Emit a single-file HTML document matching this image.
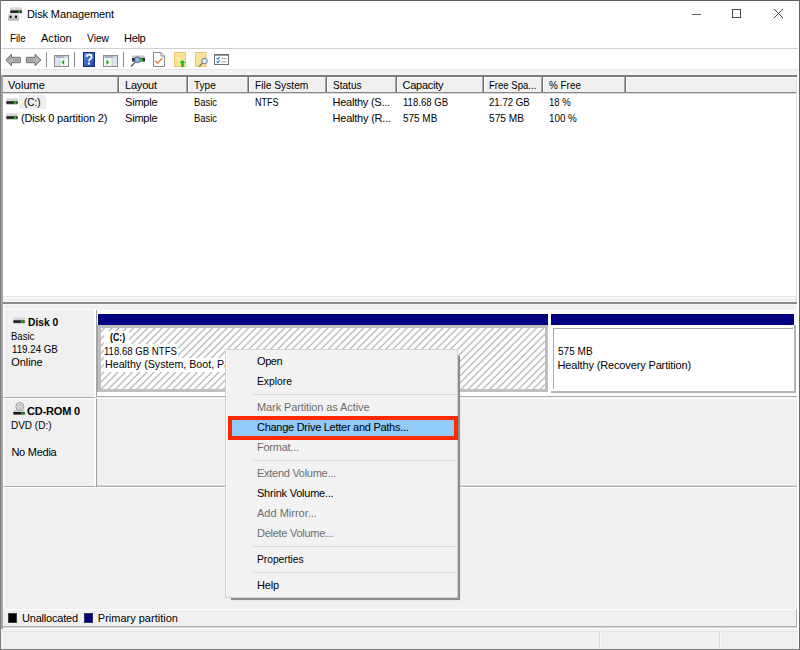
<!DOCTYPE html>
<html><head><meta charset="utf-8"><style>
html,body{margin:0;padding:0;width:800px;height:650px;overflow:hidden;background:#fff;}
body{position:relative;font-family:"Liberation Sans",sans-serif;}
.r{position:absolute;}
.t{position:absolute;white-space:nowrap;line-height:13px;font-family:"Liberation Sans",sans-serif;}
</style></head><body>
<div class="r" style="left:0px;top:0px;width:800px;height:650px;background:#ffffff;"></div>
<svg class="r" style="left:8px;top:7px" width="15" height="14" viewBox="0 0 15 14"><defs><linearGradient id="tg" x1="0" y1="0" x2="0" y2="1"><stop offset="0" stop-color="#e4e4e4"/><stop offset="1" stop-color="#b4b4b4"/></linearGradient></defs><rect x="2" y="0" width="12" height="6.5" rx="1.5" fill="url(#tg)"/><rect x="2.3" y="3.4" width="11.5" height="2.6" fill="#252525"/><rect x="10.3" y="3.7" width="1.7" height="2" fill="#1fd61f"/><rect x="0" y="6.5" width="11" height="7.3" rx="0.8" fill="url(#tg)"/><ellipse cx="2.6" cy="9.9" rx="1.1" ry="1.4" fill="#161616"/><ellipse cx="8" cy="9.9" rx="1.1" ry="1.4" fill="#161616"/></svg>
<div class="t" style="left:27.00px;top:8px;font-size:11px;color:#000;font-weight:normal;letter-spacing:-0.114px;">Disk Management</div>
<div class="r" style="left:692px;top:14px;width:9px;height:1px;background:#606060;"></div>
<div class="r" style="left:732px;top:9px;width:9px;height:9px;background:transparent;border:1px solid #4a4a4a;box-sizing:border-box;"></div>
<svg class="r" style="left:773px;top:8px" width="11" height="11" viewBox="0 0 11 11"><path d="M1 1L10 10M10 1L1 10" stroke="#2a2a2a" stroke-width="0.9"/></svg>
<div class="t" style="left:10.40px;top:32px;font-size:11px;color:#000;font-weight:normal;transform:scaleX(0.8860);transform-origin:0 0;">File</div>
<div class="t" style="left:41.00px;top:32px;font-size:11px;color:#000;font-weight:normal;letter-spacing:0.029px;">Action</div>
<div class="t" style="left:87.00px;top:32px;font-size:11px;color:#000;font-weight:normal;transform:scaleX(0.9283);transform-origin:0 0;">View</div>
<div class="t" style="left:124.00px;top:32px;font-size:11px;color:#000;font-weight:normal;letter-spacing:-0.302px;">Help</div>
<div class="r" style="left:1px;top:48px;width:797px;height:1px;background:#d0d0d0;"></div>
<svg class="r" style="left:5px;top:53px" width="40" height="15" viewBox="0 0 40 15"><path d="M0.8 7 L6.5 1.2 L6.5 4.3 L14.8 4.3 Q15.3 4.3 15.3 5 L15.3 9 Q15.3 9.7 14.8 9.7 L6.5 9.7 L6.5 12.8 Z" fill="#b4b4b4" stroke="#6a6a6a" stroke-width="1" stroke-linejoin="round"/><path d="M3 7 L6 4.5 M8 7 H14" stroke="#888" stroke-width="1"/><path d="M35.8 7 L30.1 1.2 L30.1 4.3 L21.8 4.3 Q21.3 4.3 21.3 5 L21.3 9 Q21.3 9.7 21.8 9.7 L30.1 9.7 L30.1 12.8 Z" fill="#b4b4b4" stroke="#6a6a6a" stroke-width="1" stroke-linejoin="round"/><path d="M22.5 7 H28.5" stroke="#888" stroke-width="1"/></svg>
<div class="r" style="left:46px;top:52px;width:1px;height:15px;background:#8a8a8a;"></div>
<div class="r" style="left:74px;top:52px;width:1px;height:15px;background:#8a8a8a;"></div>
<div class="r" style="left:123px;top:52px;width:1px;height:15px;background:#8a8a8a;"></div>
<svg class="r" style="left:54px;top:55px" width="15" height="12" viewBox="0 0 15 12"><rect x="0.5" y="0.5" width="14" height="11" fill="#fafafa" stroke="#8c8c8c"/><rect x="1" y="1" width="13" height="2.2" fill="#c9d3e0"/><rect x="2" y="1.6" width="8" height="0.8" fill="#7088a8"/><rect x="1" y="3.5" width="4.5" height="7.5" fill="#dce6f2"/><rect x="5.5" y="3.5" width="0.8" height="7.5" fill="#a8b8cc"/><path d="M7.3 7.3 L10.2 4.6 L10.2 10 Z" fill="#1fae1f"/></svg>
<svg class="r" style="left:83px;top:52px" width="12" height="15" viewBox="0 0 12 15"><defs><linearGradient id="hg" x1="0" y1="0" x2="1" y2="1"><stop offset="0" stop-color="#5a8ee6"/><stop offset="1" stop-color="#1f45b0"/></linearGradient></defs><rect x="0.5" y="0.5" width="11" height="14" fill="url(#hg)" stroke="#142a78"/><path d="M3.6 5 Q3.6 2.6 6 2.6 Q8.6 2.6 8.6 5 Q8.6 6.4 7 7.3 Q6 7.9 6 9.5" stroke="#fff" stroke-width="1.7" fill="none"/><rect x="5" y="10.6" width="2" height="2" fill="#fff"/></svg>
<svg class="r" style="left:103px;top:55px" width="15" height="12" viewBox="0 0 15 12"><rect x="0.5" y="0.5" width="14" height="11" fill="#fafafa" stroke="#8c8c8c"/><rect x="1" y="1" width="13" height="2.2" fill="#c9d3e0"/><rect x="2" y="1.6" width="8" height="0.8" fill="#7088a8"/><rect x="9.5" y="3.5" width="4.5" height="7.5" fill="#dce6f2"/><rect x="8.7" y="3.5" width="0.8" height="7.5" fill="#a8b8cc"/><path d="M6.3 7.3 L3.4 4.6 L3.4 10 Z" fill="#1fae1f"/></svg>
<svg class="r" style="left:130px;top:54px" width="16" height="14" viewBox="0 0 16 14"><rect x="2" y="1.5" width="13" height="3.5" rx="1" fill="#c4c4c4"/><rect x="2" y="4" width="13" height="3.5" fill="#2a2a2a"/><rect x="10" y="4.6" width="3" height="2.3" fill="#22cc22"/><circle cx="7.5" cy="5.8" r="2.9" fill="#8fb8e0" stroke="#4a6a92" stroke-width="1"/><path d="M5.4 8 L1 12.5" stroke="#506070" stroke-width="1.3"/></svg>
<svg class="r" style="left:153px;top:52px" width="12" height="15" viewBox="0 0 12 15"><path d="M0.5 0.5 H8 L11.5 4 V14.5 H0.5 Z" fill="#fff" stroke="#8a8a8a"/><path d="M8 0.5 V4 H11.5" fill="#eee" stroke="#8a8a8a"/><path d="M2.3 8.8 L4.5 11.2 L9.5 6" stroke="#e08040" stroke-width="1.3" fill="none"/></svg>
<svg class="r" style="left:174px;top:52px" width="12" height="15" viewBox="0 0 12 15"><rect x="0.5" y="0.5" width="11" height="14" fill="#fae39a" stroke="#ecc868"/><path d="M8.5 8 L11.5 11 H9.7 V15 H7.3 V11 H5.5 Z" fill="#12b812"/></svg>
<svg class="r" style="left:195px;top:52px" width="14" height="15" viewBox="0 0 14 15"><rect x="0.5" y="0.5" width="10.5" height="14" fill="#fae39a" stroke="#ecc868"/><circle cx="9.5" cy="9" r="2.8" fill="#dbe8f6" stroke="#6f7f90" stroke-width="1"/><path d="M7.4 11.1 L4 14.6" stroke="#606878" stroke-width="1.3"/></svg>
<svg class="r" style="left:214px;top:54px" width="15" height="11" viewBox="0 0 15 11"><rect x="0.5" y="0.5" width="14" height="10" fill="#fff" stroke="#6e6e6e"/><rect x="1" y="1" width="13" height="1" fill="#9a9a9a"/><path d="M2.5 4 L3.8 5.3 L5.8 2.8" stroke="#2f7fe0" stroke-width="1.1" fill="none"/><path d="M2.5 7.5 L3.8 8.8 L5.8 6.3" stroke="#2f7fe0" stroke-width="1.1" fill="none"/><rect x="7.5" y="4" width="5" height="1" fill="#a8a8a8"/><rect x="7.5" y="7.5" width="5" height="1" fill="#a8a8a8"/></svg>
<div class="r" style="left:1px;top:69px;width:797px;height:6px;background:#f3f3f3;"></div>
<div class="r" style="left:1px;top:69px;width:797px;height:1px;background:#e6e6e6;"></div>
<div class="r" style="left:1px;top:75px;width:797px;height:2px;background:#7c7c7c;"></div>
<div class="r" style="left:1px;top:75px;width:2px;height:228px;background:#a0a0a0;"></div>
<div class="r" style="left:3px;top:77px;width:794px;height:16px;background:#f0f0f0;"></div>
<div class="r" style="left:3px;top:77px;width:794px;height:1px;background:#ffffff;"></div>
<div class="r" style="left:3px;top:92px;width:794px;height:1px;background:#888888;"></div>
<div class="r" style="left:3px;top:93px;width:794px;height:1px;background:#d8d8d8;"></div>
<div class="r" style="left:117px;top:77px;width:1px;height:15px;background:#a8a8a8;"></div>
<div class="r" style="left:118px;top:77px;width:1px;height:15px;background:#6e6e6e;"></div>
<div class="r" style="left:119px;top:78px;width:1px;height:14px;background:#ffffff;"></div>
<div class="r" style="left:186px;top:77px;width:1px;height:15px;background:#a8a8a8;"></div>
<div class="r" style="left:187px;top:77px;width:1px;height:15px;background:#6e6e6e;"></div>
<div class="r" style="left:188px;top:78px;width:1px;height:14px;background:#ffffff;"></div>
<div class="r" style="left:247px;top:77px;width:1px;height:15px;background:#a8a8a8;"></div>
<div class="r" style="left:248px;top:77px;width:1px;height:15px;background:#6e6e6e;"></div>
<div class="r" style="left:249px;top:78px;width:1px;height:14px;background:#ffffff;"></div>
<div class="r" style="left:325px;top:77px;width:1px;height:15px;background:#a8a8a8;"></div>
<div class="r" style="left:326px;top:77px;width:1px;height:15px;background:#6e6e6e;"></div>
<div class="r" style="left:327px;top:78px;width:1px;height:14px;background:#ffffff;"></div>
<div class="r" style="left:395px;top:77px;width:1px;height:15px;background:#a8a8a8;"></div>
<div class="r" style="left:396px;top:77px;width:1px;height:15px;background:#6e6e6e;"></div>
<div class="r" style="left:397px;top:78px;width:1px;height:14px;background:#ffffff;"></div>
<div class="r" style="left:482px;top:77px;width:1px;height:15px;background:#a8a8a8;"></div>
<div class="r" style="left:483px;top:77px;width:1px;height:15px;background:#6e6e6e;"></div>
<div class="r" style="left:484px;top:78px;width:1px;height:14px;background:#ffffff;"></div>
<div class="r" style="left:541px;top:77px;width:1px;height:15px;background:#a8a8a8;"></div>
<div class="r" style="left:542px;top:77px;width:1px;height:15px;background:#6e6e6e;"></div>
<div class="r" style="left:543px;top:78px;width:1px;height:14px;background:#ffffff;"></div>
<div class="r" style="left:624px;top:77px;width:1px;height:15px;background:#a8a8a8;"></div>
<div class="r" style="left:625px;top:77px;width:1px;height:15px;background:#6e6e6e;"></div>
<div class="r" style="left:626px;top:78px;width:1px;height:14px;background:#ffffff;"></div>
<div class="t" style="left:8.00px;top:79px;font-size:11px;color:#000;font-weight:normal;letter-spacing:0.046px;">Volume</div>
<div class="t" style="left:125.00px;top:79px;font-size:11px;color:#000;font-weight:normal;letter-spacing:-0.194px;">Layout</div>
<div class="t" style="left:194.30px;top:79px;font-size:11px;color:#000;font-weight:normal;transform:scaleX(0.9145);transform-origin:0 0;">Type</div>
<div class="t" style="left:255.30px;top:79px;font-size:11px;color:#000;font-weight:normal;transform:scaleX(0.9286);transform-origin:0 0;">File System</div>
<div class="t" style="left:332.50px;top:79px;font-size:11px;color:#000;font-weight:normal;transform:scaleX(0.9153);transform-origin:0 0;">Status</div>
<div class="t" style="left:402.50px;top:79px;font-size:11px;color:#000;font-weight:normal;letter-spacing:-0.257px;">Capacity</div>
<div class="t" style="left:488.70px;top:79px;font-size:11px;color:#000;font-weight:normal;transform:scaleX(0.8702);transform-origin:0 0;">Free Spa...</div>
<div class="t" style="left:548.70px;top:79px;font-size:11px;color:#000;font-weight:normal;transform:scaleX(0.8999);transform-origin:0 0;">% Free</div>
<div class="r" style="left:19px;top:95px;width:27px;height:14px;background:#eeeeee;"></div>
<svg class="r" style="left:6px;top:98px" width="12" height="7" viewBox="0 0 12 7"><rect x="0.3" y="0" width="11.4" height="4" rx="1.2" fill="#d0d0d0"/><rect x="0.3" y="0" width="11.4" height="1.5" rx="0.8" fill="#e2e2e2"/><rect x="0.3" y="3.3" width="11.4" height="2.6" fill="#181818"/><rect x="8" y="3.6" width="2.4" height="2" fill="#22d022"/><rect x="0.5" y="5.9" width="11" height="1" fill="#c8c8c8"/></svg>
<svg class="r" style="left:6px;top:113px" width="12" height="7" viewBox="0 0 12 7"><rect x="0.3" y="0" width="11.4" height="4" rx="1.2" fill="#d0d0d0"/><rect x="0.3" y="0" width="11.4" height="1.5" rx="0.8" fill="#e2e2e2"/><rect x="0.3" y="3.3" width="11.4" height="2.6" fill="#181818"/><rect x="8" y="3.6" width="2.4" height="2" fill="#22d022"/><rect x="0.5" y="5.9" width="11" height="1" fill="#c8c8c8"/></svg>
<div class="t" style="left:23.50px;top:96px;font-size:11px;color:#000;font-weight:normal;transform:scaleX(0.9058);transform-origin:0 0;">(C:)</div>
<div class="t" style="left:125.00px;top:96px;font-size:11px;color:#000;font-weight:normal;letter-spacing:-0.201px;">Simple</div>
<div class="t" style="left:193.60px;top:96px;font-size:11px;color:#000;font-weight:normal;transform:scaleX(0.8541);transform-origin:0 0;">Basic</div>
<div class="t" style="left:254.80px;top:96px;font-size:11px;color:#000;font-weight:normal;transform:scaleX(0.8174);transform-origin:0 0;">NTFS</div>
<div class="t" style="left:332.50px;top:96px;font-size:11px;color:#000;font-weight:normal;letter-spacing:-0.247px;">Healthy (S...</div>
<div class="t" style="left:403.00px;top:96px;font-size:11px;color:#000;font-weight:normal;transform:scaleX(0.8709);transform-origin:0 0;">118.68 GB</div>
<div class="t" style="left:489.00px;top:96px;font-size:11px;color:#000;font-weight:normal;transform:scaleX(0.8778);transform-origin:0 0;">21.72 GB</div>
<div class="t" style="left:549.00px;top:96px;font-size:11px;color:#000;font-weight:normal;transform:scaleX(0.8699);transform-origin:0 0;">18 %</div>
<div class="t" style="left:21.00px;top:112px;font-size:11px;color:#000;font-weight:normal;letter-spacing:-0.147px;">(Disk 0 partition 2)</div>
<div class="t" style="left:125.00px;top:112px;font-size:11px;color:#000;font-weight:normal;letter-spacing:-0.201px;">Simple</div>
<div class="t" style="left:193.60px;top:112px;font-size:11px;color:#000;font-weight:normal;transform:scaleX(0.8541);transform-origin:0 0;">Basic</div>
<div class="t" style="left:332.50px;top:112px;font-size:11px;color:#000;font-weight:normal;letter-spacing:-0.214px;">Healthy (R...</div>
<div class="t" style="left:403.00px;top:112px;font-size:11px;color:#000;font-weight:normal;transform:scaleX(0.9049);transform-origin:0 0;">575 MB</div>
<div class="t" style="left:489.00px;top:112px;font-size:11px;color:#000;font-weight:normal;transform:scaleX(0.9236);transform-origin:0 0;">575 MB</div>
<div class="t" style="left:549.00px;top:112px;font-size:11px;color:#000;font-weight:normal;transform:scaleX(0.8915);transform-origin:0 0;">100 %</div>
<div class="r" style="left:3px;top:296px;width:794px;height:1px;background:#e6e6e6;"></div>
<div class="r" style="left:3px;top:297px;width:794px;height:5px;background:#f6f6f6;"></div>
<div class="r" style="left:3px;top:299px;width:794px;height:2px;background:#ededed;"></div>
<div class="r" style="left:1px;top:302px;width:797px;height:2px;background:#8c8c8c;"></div>
<div class="r" style="left:796px;top:77px;width:1px;height:225px;background:#e3e3e3;"></div>
<div class="r" style="left:1px;top:304px;width:797px;height:325px;background:#f0f0f0;"></div>
<div class="r" style="left:3px;top:304px;width:794px;height:1px;background:#f8f8f8;"></div>
<div class="r" style="left:3px;top:304px;width:1px;height:305px;background:#ffffff;"></div>
<div class="r" style="left:3px;top:309px;width:93px;height:89px;background:#f0f0f0;border-top:1px solid #fff;border-left:1px solid #fff;border-right:2px solid #fff;border-bottom:1px solid #a8a8a8;box-sizing:border-box"></div>
<svg class="r" style="left:13px;top:317px" width="12" height="7" viewBox="0 0 12 7"><rect x="0.3" y="0" width="11.4" height="4" rx="1.2" fill="#d0d0d0"/><rect x="0.3" y="0" width="11.4" height="1.5" rx="0.8" fill="#e2e2e2"/><rect x="0.3" y="3.3" width="11.4" height="2.6" fill="#181818"/><rect x="8" y="3.6" width="2.4" height="2" fill="#22d022"/><rect x="0.5" y="5.9" width="11" height="1" fill="#c8c8c8"/></svg>
<div class="t" style="left:27.50px;top:316px;font-size:11px;color:#000;font-weight:bold;transform:scaleX(0.9290);transform-origin:0 0;">Disk 0</div>
<div class="t" style="left:11.30px;top:330px;font-size:11px;color:#000;font-weight:normal;transform:scaleX(0.8650);transform-origin:0 0;">Basic</div>
<div class="t" style="left:11.50px;top:343px;font-size:11px;color:#000;font-weight:normal;transform:scaleX(0.8845);transform-origin:0 0;">119.24 GB</div>
<div class="t" style="left:11.30px;top:356px;font-size:11px;color:#000;font-weight:normal;letter-spacing:-0.096px;">Online</div>
<div class="r" style="left:96px;top:310px;width:701px;height:87px;background:#ffffff;border-left:1px solid #a0a0a0;border-bottom:1px solid #a8a8a8;box-sizing:border-box"></div>
<div class="r" style="left:98px;top:314px;width:450px;height:11px;background:#000080;"></div>
<div class="r" style="left:97px;top:325px;width:451px;height:67px;background:#bfbfbf;border-left:1px solid #a8a8a8;box-sizing:border-box"></div>
<svg class="r" style="left:101px;top:328px" width="444" height="61"><defs><pattern id="h" patternUnits="userSpaceOnUse" width="7.2" height="7.2" patternTransform="translate(3.6 0)"><path d="M-1.8 1.8 L1.8 -1.8 M0 7.2 L7.2 0 M5.4 9 L9 5.4" stroke="#9e9e9e" stroke-width="1"/></pattern></defs><rect width="444" height="61" fill="#fff"/><rect width="444" height="61" fill="url(#h)"/></svg>
<div class="r" style="left:104px;top:331px;width:25px;height:13px;background:#ffffff;"></div>
<div class="r" style="left:104px;top:344px;width:74px;height:14px;background:#ffffff;"></div>
<div class="r" style="left:104px;top:358px;width:122px;height:14px;background:#ffffff;"></div>
<div class="t" style="left:110.00px;top:331px;font-size:11px;color:#000;font-weight:bold;transform:scaleX(0.7992);transform-origin:0 0;">(C:)</div>
<div class="t" style="left:104.40px;top:345px;font-size:11px;color:#000;font-weight:normal;transform:scaleX(0.8724);transform-origin:0 0;">118.68 GB NTFS</div>
<div class="r" style="left:100px;top:357px;width:126px;height:14px;overflow:hidden"><div class="t" style="left:4.50px;top:1px;font-size:11px;color:#000;font-weight:normal;transform:scaleX(0.97);transform-origin:0 0;">Healthy (System, Boot, Page File, Active, Crash Dump, Primary Partition)</div>
</div>
<div class="r" style="left:551px;top:314px;width:243px;height:11px;background:#000080;"></div>
<div class="r" style="left:551px;top:325px;width:245px;height:68px;background:#ffffff;border-right:2px solid #b4b4b4;border-bottom:2px solid #b4b4b4;box-sizing:border-box"></div>
<div class="r" style="left:553px;top:328px;width:240px;height:61px;background:#ffffff;border-left:1px solid #a8a8a8;border-top:1px solid #a8a8a8;box-sizing:border-box"></div>
<div class="t" style="left:557.50px;top:345px;font-size:11px;color:#000;font-weight:normal;transform:scaleX(0.9129);transform-origin:0 0;">575 MB</div>
<div class="t" style="left:557.50px;top:359px;font-size:11px;color:#000;font-weight:normal;letter-spacing:-0.144px;">Healthy (Recovery Partition)</div>
<div class="r" style="left:3px;top:398px;width:93px;height:89px;background:#f0f0f0;border-top:1px solid #fff;border-left:1px solid #fff;border-right:2px solid #fff;border-bottom:1px solid #a8a8a8;box-sizing:border-box"></div>
<div class="r" style="left:96px;top:398px;width:701px;height:89px;background:#f0f0f0;border-top:1px solid #fff;border-left:1px solid #a0a0a0;border-bottom:1px solid #b4b4b4;box-sizing:border-box"></div>
<div class="r" style="left:97px;top:484px;width:700px;height:1px;background:#f8f8f8;"></div>
<div class="r" style="left:97px;top:485px;width:700px;height:1px;background:#d4d4d4;"></div>
<svg class="r" style="left:13px;top:402px" width="12" height="13" viewBox="0 0 12 13"><rect x="0.5" y="7.5" width="11" height="3" rx="1" fill="#d2d2d2"/><circle cx="6.8" cy="4.6" r="4" fill="#d6d6d6" stroke="#9c9c9c" stroke-width="0.9"/><circle cx="6.8" cy="4.6" r="1.4" fill="#f4f4f4" stroke="#9c9c9c" stroke-width="0.7"/><rect x="0.3" y="10" width="11.4" height="2.6" fill="#1a1a1a"/><rect x="8.3" y="10.4" width="2.4" height="1.8" fill="#22cc22"/></svg>
<div class="t" style="left:27.00px;top:405px;font-size:11px;color:#000;font-weight:bold;letter-spacing:-0.181px;">CD-ROM 0</div>
<div class="t" style="left:11.40px;top:419px;font-size:11px;color:#000;font-weight:normal;transform:scaleX(0.9080);transform-origin:0 0;">DVD (D:)</div>
<div class="t" style="left:11.40px;top:446px;font-size:11px;color:#000;font-weight:normal;letter-spacing:-0.251px;">No Media</div>
<div class="r" style="left:3px;top:487px;width:794px;height:1px;background:#ffffff;"></div>
<div class="r" style="left:1px;top:609px;width:797px;height:1px;background:#ffffff;"></div>
<div class="r" style="left:1px;top:626px;width:797px;height:1px;background:#b0b0b0;"></div>
<div class="r" style="left:1px;top:627px;width:797px;height:1px;background:#d4d4d4;"></div>
<div class="r" style="left:1px;top:628px;width:797px;height:1px;background:#ffffff;"></div>
<div class="r" style="left:796px;top:609px;width:1px;height:18px;background:#b0b0b0;"></div>
<div class="r" style="left:8px;top:613px;width:9px;height:10px;background:#000000;border:1px solid #404040;box-sizing:border-box"></div>
<div class="t" style="left:22.00px;top:612px;font-size:11px;color:#000;font-weight:normal;letter-spacing:-0.198px;">Unallocated</div>
<div class="r" style="left:84px;top:613px;width:9px;height:10px;background:#000080;border:1px solid #303060;box-sizing:border-box"></div>
<div class="t" style="left:97.80px;top:612px;font-size:11px;color:#000;font-weight:normal;">Primary partition</div>
<div class="r" style="left:1px;top:629px;width:797px;height:21px;background:#f0f0f0;"></div>
<div class="r" style="left:1px;top:628px;width:797px;height:1px;background:#ffffff;"></div>
<div class="r" style="left:3px;top:631px;width:795px;height:1px;background:#e6e6e6;"></div>
<div class="r" style="left:599px;top:631px;width:1px;height:17px;background:#d8d8d8;"></div>
<div class="r" style="left:600px;top:631px;width:1px;height:17px;background:#fafafa;"></div>
<div class="r" style="left:719px;top:631px;width:1px;height:17px;background:#d8d8d8;"></div>
<div class="r" style="left:720px;top:631px;width:1px;height:17px;background:#fafafa;"></div>
<div class="r" style="left:0px;top:0px;width:800px;height:1px;background:#626262;"></div>
<div class="r" style="left:0px;top:0px;width:1px;height:650px;background:#7c7c7c;"></div>
<div class="r" style="left:1px;top:75px;width:2px;height:554px;background:#a4a4a4;"></div>
<div class="r" style="left:799px;top:0px;width:1px;height:650px;background:#666666;"></div>
<div class="r" style="left:0px;top:649px;width:800px;height:1px;background:#767676;"></div>
<div class="r" style="left:797px;top:75px;width:2px;height:555px;background:#ffffff;"></div>
<div class="r" style="left:458px;top:356px;width:2px;height:244px;background:#8c8c8c;box-shadow:0 0 1px #b0b0b0"></div>
<div class="r" style="left:231px;top:598px;width:229px;height:2px;background:#8c8c8c;box-shadow:0 0 1px #b0b0b0"></div>
<div class="r" style="left:225px;top:349px;width:233px;height:249px;background:#f2f2f2;border:1px solid #d0d0d0;box-sizing:border-box"></div>
<div class="r" style="left:226px;top:350px;width:1px;height:247px;background:#fbfbfb;"></div>
<div class="r" style="left:228px;top:416px;width:230px;height:24px;background:#ff2a00;"></div>
<div class="r" style="left:232px;top:420px;width:222px;height:16px;background:#91c9f7;"></div>
<div class="r" style="left:253px;top:394px;width:203px;height:1px;background:#d9d9d9;"></div>
<div class="r" style="left:253px;top:460px;width:203px;height:1px;background:#d9d9d9;"></div>
<div class="r" style="left:253px;top:546px;width:203px;height:1px;background:#d9d9d9;"></div>
<div class="r" style="left:253px;top:572px;width:203px;height:1px;background:#d9d9d9;"></div>
<div class="t" style="left:257.00px;top:355px;font-size:11px;color:#000;font-weight:normal;letter-spacing:-0.431px;">Open</div>
<div class="t" style="left:257.00px;top:375px;font-size:11px;color:#000;font-weight:normal;transform:scaleX(0.9360);transform-origin:0 0;">Explore</div>
<div class="t" style="left:257.00px;top:401px;font-size:11px;color:#6d6d6d;font-weight:normal;letter-spacing:-0.105px;">Mark Partition as Active</div>
<div class="t" style="left:257.00px;top:421px;font-size:11px;color:#000;font-weight:normal;letter-spacing:-0.272px;">Change Drive Letter and Paths...</div>
<div class="t" style="left:257.00px;top:441px;font-size:11px;color:#6d6d6d;font-weight:normal;letter-spacing:-0.244px;">Format...</div>
<div class="t" style="left:257.00px;top:467px;font-size:11px;color:#6d6d6d;font-weight:normal;letter-spacing:-0.274px;">Extend Volume...</div>
<div class="t" style="left:257.00px;top:487px;font-size:11px;color:#000;font-weight:normal;letter-spacing:-0.229px;">Shrink Volume...</div>
<div class="t" style="left:257.00px;top:507px;font-size:11px;color:#6d6d6d;font-weight:normal;">Add Mirror...</div>
<div class="t" style="left:257.00px;top:527px;font-size:11px;color:#6d6d6d;font-weight:normal;letter-spacing:-0.270px;">Delete Volume...</div>
<div class="t" style="left:257.00px;top:553px;font-size:11px;color:#000;font-weight:normal;transform:scaleX(0.9282);transform-origin:0 0;">Properties</div>
<div class="t" style="left:257.00px;top:579px;font-size:11px;color:#000;font-weight:normal;letter-spacing:-0.168px;">Help</div>
</body></html>
